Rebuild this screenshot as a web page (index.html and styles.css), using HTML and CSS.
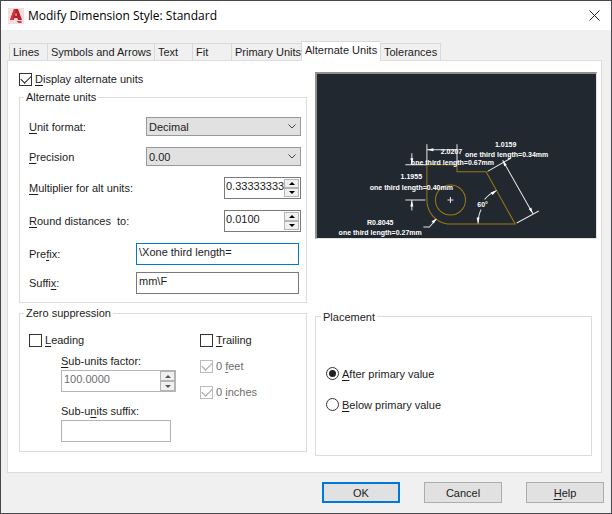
FILE: index.html
```html
<!DOCTYPE html>
<html lang="en">
<head>
    <meta charset="UTF-8">
    <meta name="viewport" content="width=device-width, initial-scale=1.0">
    <title>Modify Dimension Style: Standard</title>
    <link rel="stylesheet" href="styles.css">
</head>
<body>
    <div class="dialog">
        <header class="titlebar">
            <svg class="app-icon" viewBox="0 0 16 16" aria-hidden="true">
                <rect width="16" height="16" fill="#f6dcdc"/>
                <path d="M6 1h4l4 11h-4l-.6-2H6.400L5.600 12H2z" fill="#b3202c"/>
                <path d="M6 1h2L4.500 12H2z" fill="#d8343f"/>
                <path d="M7.200 7.500h1.700L8 4.500z" fill="#f6dcdc"/>
                <path d="M8.500 13h5v2h-3z" fill="#d8343f"/>
            </svg>
            <h1>Modify Dimension Style: Standard</h1>
            <button type="button" class="close" aria-label="Close">
                <svg viewBox="0 0 11 11"><path d="M.5.5l10 10M10.500.5l-10 10" stroke="#222" fill="none"/></svg>
            </button>
        </header>

        <nav class="tabs">
            <button type="button" class="tab tab-lines">Lines</button>
            <button type="button" class="tab tab-symbols">Symbols and Arrows</button>
            <button type="button" class="tab tab-text">Text</button>
            <button type="button" class="tab tab-fit">Fit</button>
            <button type="button" class="tab tab-primary">Primary Units</button>
            <button type="button" class="tab tab-alternate active">Alternate Units</button>
            <button type="button" class="tab tab-tolerances">Tolerances</button>
        </nav>

        <main class="panel">
            <div class="column">
                <label class="check"><input type="checkbox" checked><span><u>D</u>isplay alternate units</span></label>

                <fieldset class="units">
                    <legend>Alternate units</legend>
                    <div class="row">
                        <label for="format"><u>U</u>nit format:</label>
                        <select id="format" class="select"><option>Decimal</option></select>
                    </div>
                    <div class="row">
                        <label for="precision"><u>P</u>recision</label>
                        <select id="precision" class="select"><option>0.00</option></select>
                    </div>
                    <div class="row">
                        <label for="multiplier"><u>M</u>ultiplier for alt units:</label>
                        <div class="spin">
                            <input type="text" id="multiplier" value="0.33333333">
                            <div class="arrows">
                                <button type="button" class="up" aria-label="Up"></button>
                                <button type="button" class="down" aria-label="Down"></button>
                            </div>
                        </div>
                    </div>
                    <div class="row">
                        <label for="round"><u>R</u>ound distances&nbsp; to:</label>
                        <div class="spin">
                            <input type="text" id="round" value="0.0100">
                            <div class="arrows">
                                <button type="button" class="up" aria-label="Up"></button>
                                <button type="button" class="down" aria-label="Down"></button>
                            </div>
                        </div>
                    </div>
                    <div class="texts">
                        <div class="row">
                            <label for="prefix">Pre<u>f</u>ix:</label>
                            <input type="text" id="prefix" class="field focused" value="\Xone third length=">
                        </div>
                        <div class="row">
                            <label for="suffix">Suffi<u>x</u>:</label>
                            <input type="text" id="suffix" class="field" value="mm\F">
                        </div>
                    </div>
                </fieldset>

                <fieldset class="zero">
                    <legend>Zero suppression</legend>
                    <div class="leading">
                        <label class="check"><input type="checkbox"><span><u>L</u>eading</span></label>
                        <div class="subunits">
                            <label for="factor"><u>S</u>ub-units factor:</label>
                            <div class="spin disabled">
                                <input type="text" id="factor" value="100.0000" disabled>
                                <div class="arrows">
                                    <button type="button" class="up" aria-label="Up" disabled></button>
                                    <button type="button" class="down" aria-label="Down" disabled></button>
                                </div>
                            </div>
                            <label for="subsuffix" class="subsuffix-label">Sub-u<u>n</u>its suffix:</label>
                            <input type="text" id="subsuffix" class="field subsuffix" disabled>
                        </div>
                    </div>
                    <div class="trailing">
                        <label class="check"><input type="checkbox"><span><u>T</u>railing</span></label>
                        <label class="check disabled"><input type="checkbox" checked disabled><span>0 <u>f</u>eet</span></label>
                        <label class="check disabled"><input type="checkbox" checked disabled><span>0 <u>i</u>nches</span></label>
                    </div>
                </fieldset>
            </div>

            <div class="column">
                <div class="preview">
                    <svg viewBox="318 74 278 163">
                        <!-- part outline -->
                        <g fill="none" stroke="#9c7a10">
                            <path d="M427.500 164.500V199.500A24 24 0 0 0 448 223.500H515.500L486.500 171.500H457.500V164.500z"/>
                            <circle cx="451" cy="199.500" r="15"/>
                        </g>
                        <!-- dimension lines -->
                        <g fill="none" stroke="#e4e6e8">
                            <path d="M427.500 144v20M457.500 144v20M428 149.500h29"/>
                            <path d="M406 164.500h21M412.500 153v11M406 199.500h20M412.500 200v10"/>
                            <path d="M448 199.500h6M451 196.500v6"/>
                            <path d="M424 226.500h6l7-8"/>
                            <path d="M488 171l23-13M517 222.500l22-12M503 160l30 53"/>
                            <path d="M478.500 223q0-8 3-14M485 199q5-6 12-9"/>
                        </g>
                        <!-- arrow heads -->
                        <g fill="#fff">
                            <path d="M428 149.500l6-1.500v3zM412.500 164l-1.500-6h3zM412.500 200l-1.500 6h3z"/>
                            <path d="M437 218l-5 3 2.500 2zM503 160l1.500 6 2.500-1.500zM533 213l-1.500-6-2.500 1.500z"/>
                            <path d="M478.500 223l-1.500-6h3zM497 190l-6 2 2 2.500z"/>
                        </g>
                        <g class="dims">
                            <text x="506" y="147">1.0159</text>
                            <text x="507" y="157">one third length=0.34mm</text>
                            <text x="452" y="154">2.0207</text>
                            <text x="453" y="165">one third length=0.67mm</text>
                            <text x="412" y="179">1.1955</text>
                            <text x="412" y="190">one third length=0.40mm</text>
                            <text x="483" y="207">60°</text>
                            <text x="381" y="224">R0.8045</text>
                            <text x="381" y="234">one third length=0.27mm</text>
                        </g>
                    </svg>
                </div>

                <fieldset class="placement">
                    <legend>Placement</legend>
                    <label class="check"><input type="radio" name="placement" checked><span><u>A</u>fter primary value</span></label>
                    <label class="check"><input type="radio" name="placement"><span><u>B</u>elow primary value</span></label>
                </fieldset>
            </div>
        </main>

        <footer class="actions">
            <button type="button" class="default">OK</button>
            <button type="button">Cancel</button>
            <button type="button"><u>H</u>elp</button>
        </footer>
    </div>
</body>
</html>
```
FILE: styles.css
```css
* {
    box-sizing: border-box;
}
body {
    margin: 0;
    font: 11px/14px "Liberation Sans", Arial, sans-serif;
    color: #1c1c1c;
}
button, input, select {
    margin: 0;
    padding: 0;
    font: inherit;
    color: inherit;
    border-radius: 0;
}
u {
    text-underline-offset: 2px;
}
.dialog {
    display: flex;
    flex-direction: column;
    min-height: 100vh;
    background: #f0f0f0;
    border: 1px solid #48484c;
}

/* Title bar */
.titlebar {
    display: flex;
    align-items: center;
    height: 29px;
    padding: 0 11px 0 7px;
    background: #fff;
}
.app-icon {
    width: 16px;
    height: 16px;
}
.titlebar h1 {
    flex: 1;
    margin: 0 0 0 4px;
    font: 12px/16px "Open Sans", sans-serif;
    color: #000;
}
.close {
    display: flex;
    border: none;
    background: none;
}
.close svg {
    width: 11px;
    height: 11px;
}

/* Tabs */
.tabs {
    display: flex;
    align-items: flex-end;
    height: 31px;
    padding: 0 8px;
}
.tab {
    height: 18px;
    padding: 0 0 1px 3px;
    border: 1px solid #d9d9d9;
    border-right: none;
    background: #f0f0f0;
    text-align: left;
    white-space: nowrap;
}
.tab-lines { width: 38px; }
.tab-symbols { width: 107px; }
.tab-text { width: 38px; }
.tab-fit { width: 39px; }
.tab-primary { width: 70px; }
.tab-alternate { width: 79px; }
.tab-tolerances { width: 61px; border-right: 1px solid #d9d9d9; }
.tab.active {
    z-index: 1;
    height: 20px;
    padding-bottom: 3px;
    background: #fff;
    border-bottom-color: #fff;
}

/* Panel */
.panel {
    flex: 1;
    display: grid;
    grid-template-columns: 288fr 282fr;
    gap: 8px;
    margin: -1px 9px 0 6px;
    padding: 11px 4px 12px 11px;
    background: #fff;
    border: 1px solid #dcdcdc;
}
.column {
    display: flex;
    flex-direction: column;
    min-width: 0;
}
fieldset {
    min-width: 0;
    margin: 0;
    padding: 0;
    border: 1px solid #dcdcdc;
}
legend {
    margin-left: -5px;
    padding: 0 2px;
}
.check {
    display: flex;
    align-items: center;
    gap: 3px;
    height: 14px;
}
.check input {
    appearance: none;
    display: grid;
    place-items: center;
    flex: none;
    width: 13px;
    height: 13px;
    border: 1px solid #333;
    background: #fff;
}
.check input[type="checkbox"]:checked::before {
    content: "";
    width: 9px;
    height: 5px;
    margin-top: -2px;
    border: solid #222;
    border-width: 0 0 1px 1px;
    transform: rotate(-45deg);
}
.check input[type="radio"] {
    border-radius: 50%;
}
.check input[type="radio"]:checked::before {
    content: "";
    width: 7px;
    height: 7px;
    border-radius: 50%;
    background: #222;
}
.check.disabled {
    color: #6d6d6d;
}
.check.disabled input {
    border-color: #bcbcbc;
}
.check.disabled input:checked::before {
    border-color: #a0a0a0;
}

/* Alternate units */
.units {
    display: flex;
    flex-direction: column;
    gap: 11px;
    margin-top: 4px;
    padding: 13px 5px 8px 9px;
}
.row {
    display: flex;
    align-items: center;
    justify-content: space-between;
}
.texts {
    display: flex;
    flex-direction: column;
    gap: 7px;
    padding-right: 2px;
}
.select {
    appearance: none;
    width: 155px;
    height: 19px;
    padding: 0 2px;
    border: 1px solid #999;
    background: #e1e1e1 url("data:image/svg+xml,%3Csvg xmlns='http://www.w3.org/2000/svg' width='8' height='5'%3E%3Cpath d='M.5.5L4 4 7.500.5' fill='none' stroke='%23444'/%3E%3C/svg%3E") no-repeat right 4px center;
}
.field {
    width: 163px;
    height: 22px;
    padding: 0 2px 4px;
    border: 1px solid #7a7a7a;
    background: #fff;
}
.field.focused {
    border-color: #0078d7;
}
.spin {
    display: flex;
    width: 77px;
    height: 22px;
    padding: 1px;
    border: 1px solid #7a7a7a;
    background: #fff;
}
.spin input {
    flex: 1;
    min-width: 0;
    padding-bottom: 4px;
    border: none;
    background: none;
}
.arrows {
    display: flex;
    flex-direction: column;
    width: 15px;
}
.arrows button {
    flex: 1;
    display: grid;
    place-items: center;
    border: 1px solid #b4b4b4;
    background: #f0f0f0;
}
.arrows button::before {
    content: "";
    border: solid transparent;
    border-width: 0 3px;
}
.arrows .up::before {
    border-bottom: 3px solid #000;
}
.arrows .down::before {
    border-top: 3px solid #000;
}

/* Zero suppression */
.zero {
    display: grid;
    grid-template-columns: 171px 1fr;
    margin-top: 3px;
    padding: 13px 5px 9px 9px;
}
.subunits {
    display: flex;
    flex-direction: column;
    margin: 7px 0 0 32px;
}
.spin.disabled {
    width: 115px;
    margin-top: 2px;
    padding: 0 0 0 2px;
    border-color: #b4b4b4;
    color: #6d6d6d;
}
.spin.disabled .up::before {
    border-bottom-color: #555;
}
.spin.disabled .down::before {
    border-top-color: #555;
}
.subsuffix-label {
    margin-top: 12px;
}
.subsuffix {
    width: 110px;
    margin-top: 2px;
    border-color: #b4b4b4;
}
.trailing {
    display: flex;
    flex-direction: column;
    gap: 12px;
}

/* Preview */
.preview {
    border: 1px solid #e3e3e3;
    border-top: 2px solid #909090;
    border-left: 2px solid #909090;
    background: #212830;
}
.preview svg {
    display: block;
    width: 100%;
}
.dims {
    font: bold 7px "Liberation Sans", Arial, sans-serif;
    fill: #fff;
    text-anchor: middle;
}

/* Placement */
.placement {
    display: flex;
    flex-direction: column;
    gap: 17px;
    margin: 71px 5px 0 0;
    padding: 43px 10px;
}

/* Buttons */
.actions {
    display: flex;
    justify-content: flex-end;
    gap: 24px;
    padding: 9px 7px 10px;
}
.actions button {
    width: 78px;
    height: 21px;
    border: 1px solid #adadad;
    background: #e1e1e1;
}
.actions .default {
    border: 2px solid #0078d7;
}
```
